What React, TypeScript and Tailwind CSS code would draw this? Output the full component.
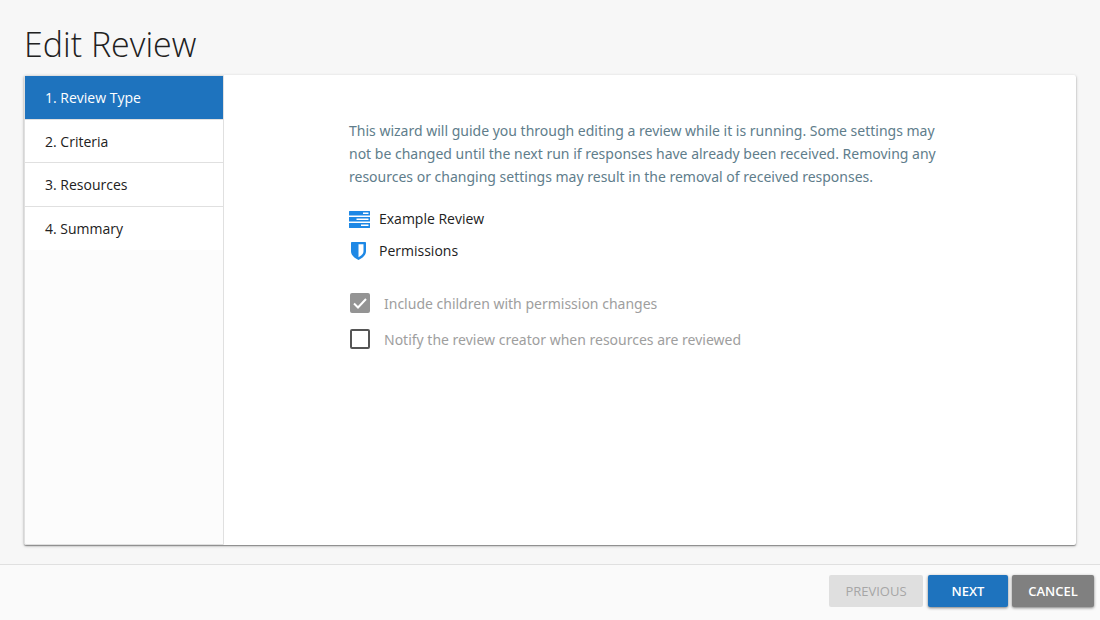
import React from "react";

const steps = ["Review Type", "Criteria", "Resources", "Summary"];

function TasksIcon() {
  return (
    <svg viewBox="0 0 21 17" className="h-[17px] w-[21px]" aria-hidden="true">
      <path
        fill="#1e88e5"
        fillRule="evenodd"
        d="M.5 0h20a.5.5 0 0 1 .5.5v4h-21v-4A.5.5 0 0 1 .5 0zM14 1.500v1.500h5.500V1.500zM0 6h21v4.500H0zM7.500 7.500v1.500h12V7.500zM0 12h21v4.500a.5.5 0 0 1-.5.5h-20a.5.5 0 0 1-.5-.5zM12 13.500v1.500h7.500v-1.500z"
      />
    </svg>
  );
}

function ShieldIcon() {
  return (
    <svg viewBox="0 0 15 18" className="h-[18px] w-[15px]" aria-hidden="true">
      <path
        fill="#1e88e5"
        fillRule="evenodd"
        d="M.8 0h13.4a.8.8 0 0 1 .8.8v8.4c0 4.2-3.6 6.9-7.500 8.800C3.600 16.100 0 13.400 0 9.200V.8A.8.8 0 0 1 .8 0zM7.500 2.300v12.900c2.600-1.500 5-3.300 5-6V2.300z"
      />
    </svg>
  );
}

function CheckOption({ id, label, checked }: { id: string; label: string; checked?: boolean }) {
  return (
    <div className="flex h-9 items-center gap-[14px]">
      <span className="relative flex size-5">
        <input
          id={id}
          type="checkbox"
          defaultChecked={checked}
          disabled
          className="peer size-5 appearance-none rounded-xs border-2 border-[#555] bg-white checked:border-[#949494] checked:bg-[#949494]"
        />
        <svg
          viewBox="0 0 20 20"
          className="pointer-events-none absolute inset-0 hidden size-5 peer-checked:block"
          aria-hidden="true"
        >
          <path d="M4 10.500l4 4 8-8.500" fill="none" stroke="white" strokeWidth="2" />
        </svg>
      </span>
      <label htmlFor={id} className="pt-0.5 font-['Noto_Sans','Open_Sans',sans-serif] text-[#9e9e9e]">
        {label}
      </label>
    </div>
  );
}

export default function App() {
  return (
    <div className="flex min-h-screen flex-col bg-[#f7f7f7] font-['Open_Sans','Noto_Sans',sans-serif] text-sm text-[#212121]">
      <main className="flex grow flex-col px-6 pb-[19px]">
        <h1 className="pt-5 pb-[7px] text-[34px] leading-12 font-light">Edit Review</h1>
        <div className="flex grow rounded-xs bg-white shadow-[0_1px_3px_rgba(0,0,0,0.3),0_1px_1px_rgba(0,0,0,0.3)]">
          <nav className="w-[200px] shrink-0 rounded-l-xs border border-[#e0e0e0] bg-[#fcfcfc]">
            <ol className="grid h-[174px] auto-rows-fr divide-y divide-[#e0e0e0] bg-white">
              {steps.map((step, i) => (
                <li key={step} className="flex">
                  <button
                    type="button"
                    aria-current={i === 0 ? "step" : undefined}
                    className="grow px-5 pt-0.5 text-left aria-[current=step]:bg-[#1e73be] aria-[current=step]:text-white"
                  >
                    {i + 1}. {step}
                  </button>
                </li>
              ))}
            </ol>
          </nav>
          <section className="grow px-[125px] pt-11">
            <p className="max-w-[602px] font-['Noto_Sans','Open_Sans',sans-serif] leading-[23px] text-[#607d8b]">
              This wizard will guide you through editing a review while it is running. Some settings may
              not be changed until the next run if responses have already been received. Removing any
              resources or changing settings may result in the removal of received responses.
            </p>
            <ul className="pt-[15px]">
              <li className="flex h-8 items-center gap-[9px]">
                <TasksIcon />
                Example Review
              </li>
              <li className="flex h-8 items-center gap-[9px]">
                <span className="w-[21px] pl-[2px]">
                  <ShieldIcon />
                </span>
                Permissions
              </li>
            </ul>
            <div className="pt-[18px] pl-px">
              <CheckOption id="children" label="Include children with permission changes" checked />
              <CheckOption id="notify" label="Notify the review creator when resources are reviewed" />
            </div>
          </section>
        </div>
      </main>
      <footer className="flex justify-end gap-1 border-t border-[#e0e0e0] bg-[#fafafa] px-[6px] pt-[10px] pb-[13px] text-[13px] font-semibold">
        <button type="button" disabled className="mr-px h-8 w-[94px] rounded-xs bg-[#dfdfdf] font-medium text-[#a6a6a6]">
          PREVIOUS
        </button>
        <button type="button" className="h-8 w-20 rounded-xs bg-[#1e73be] text-white shadow-[0_1px_3px_rgba(0,0,0,0.5)]">
          NEXT
        </button>
        <button type="button" className="h-8 w-[82px] rounded-xs bg-[#808080] text-white shadow-[0_1px_3px_rgba(0,0,0,0.5)]">
          CANCEL
        </button>
      </footer>
    </div>
  );
}
